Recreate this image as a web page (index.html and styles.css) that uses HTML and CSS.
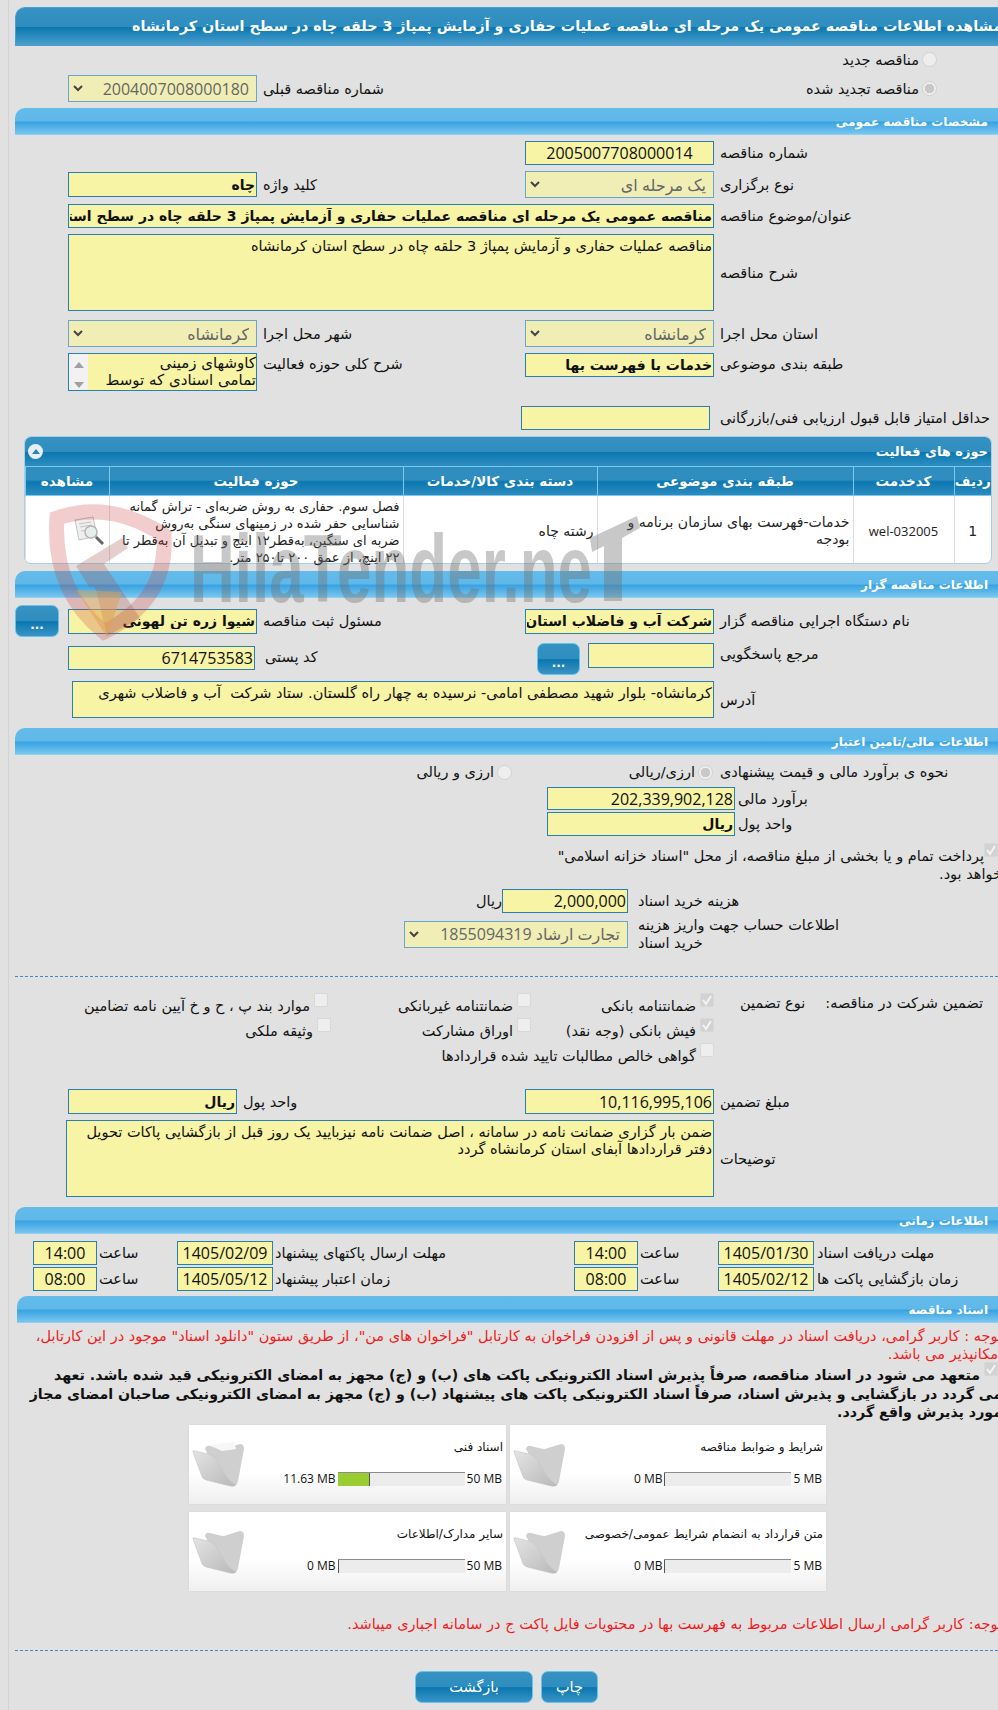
FILE: index.html
```html
<!DOCTYPE html>
<html lang="fa">
<head>
<meta charset="utf-8">
<title>مشاهده اطلاعات مناقصه</title>
<link rel="stylesheet" href="styles.css">
</head>
<body>
<div class="page">
  <h1 class="title">مشاهده اطلاعات مناقصه عمومی یک مرحله ای مناقصه عملیات حفاری و آزمایش پمپاژ 3 حلقه چاه در سطح استان کرمانشاه</h1>

  <div class="row r-new"><span class="radio"></span><span>مناقصه جدید</span></div>
  <div class="row r-renew">
    <div class="cell-a radio-cell"><span class="radio on"></span><span>مناقصه تجدید شده</span></div>
    <div class="cell-b"></div>
    <div class="cell-c">شماره مناقصه قبلی</div>
    <select class="sel w-b" disabled><option>2004007008000180</option></select>
  </div>

  <h2 class="sec">مشخصات مناقصه عمومی</h2>

  <div class="row m6 mid">
    <div class="cell-a">شماره مناقصه</div>
    <input class="fld num w-b center" readonly value="2005007708000014">
  </div>
  <div class="row m6 mid">
    <div class="cell-a">نوع برگزاری</div>
    <select class="sel w-b" disabled><option>یک مرحله ای</option></select>
    <div class="cell-c">کلید واژه</div>
    <input class="fld w-b h25 strong" readonly value="چاه">
  </div>
  <div class="row m6 mid">
    <div class="cell-a">عنوان/موضوع مناقصه</div>
    <input class="fld strong w-wide" readonly value="مناقصه عمومی یک مرحله ای مناقصه عملیات حفاری و آزمایش پمپاژ 3 حلقه چاه در سطح استان کرمانشاه">
  </div>
  <div class="row m6 mid">
    <div class="cell-a">شرح مناقصه</div>
    <textarea class="area w-wide h77" readonly>مناقصه عملیات حفاری و آزمایش پمپاژ 3 حلقه چاه در سطح استان کرمانشاه</textarea>
  </div>
  <div class="row m9 mid">
    <div class="cell-a">استان محل اجرا</div>
    <select class="sel w-b" disabled><option>کرمانشاه</option></select>
    <div class="cell-c">شهر محل اجرا</div>
    <select class="sel w-b" disabled><option>کرمانشاه</option></select>
  </div>
  <div class="row m6">
    <div class="cell-a pt3">طبقه بندی موضوعی</div>
    <input class="fld strong w-b" readonly value="خدمات با فهرست بها">
    <div class="cell-c pt3">شرح کلی حوزه فعالیت</div>
    <div class="listbox w-b">
      <div class="listbox-text">کاوشهای زمینی<br>تمامی اسنادی که توسط</div>
      <div class="listbox-bar"><span class="tri-up"></span><span class="tri-down"></span></div>
    </div>
  </div>
  <div class="row m15 mid">
    <div class="cell-a">حداقل امتیاز قابل قبول ارزیابی فنی/بازرگانی</div>
    <input class="fld w-b ms4" readonly>
  </div>

  <section class="activity">
    <div class="activity-head"><span>حوزه های فعالیت</span><span class="collapse"><span class="collapse-tri"></span></span></div>
    <table class="grid">
      <thead>
        <tr><th class="c1">ردیف</th><th class="c2">کدخدمت</th><th class="c3">طبقه بندی موضوعی</th><th class="c4">دسته بندی کالا/خدمات</th><th class="c5">حوزه فعالیت</th><th class="c6">مشاهده</th></tr>
      </thead>
      <tbody>
        <tr>
          <td class="tc">1</td>
          <td class="tc num-cell">wel-032005</td>
          <td>خدمات-فهرست بهای سازمان برنامه و<br>بودجه</td>
          <td>رشته چاه</td>
          <td class="td-scope">فصل سوم. حفاری به روش ضربه‌ای - تراش گمانه<br>شناسایی حفر شده در زمینهای سنگی به‌روش<br>ضربه ای سنگین، به‌قطر۱۲ اینچ و تبدیل آن به‌قطر تا<br>۲۲ اینچ، از عمق ۲۰۰ تا۲۵۰ متر.</td>
          <td class="td-view">
            <svg class="view-ico" viewBox="0 0 34 30" aria-hidden="true"><path d="M2 4 L20 1 L24 20 L6 24 Z" fill="#efefef" stroke="#c4c4c4"/><path d="M6 8 L18 6 M7 11 L19 9 M8 15 L14 14" stroke="#c4c4c4"/><circle cx="18" cy="16" r="6" fill="#e8eeee" stroke="#b4b4b4" stroke-width="1.5"/><path d="M23 21 L30 28" stroke="#666" stroke-width="3"/></svg>
          </td>
        </tr>
      </tbody>
    </table>
  </section>

  <h2 class="sec m7">اطلاعات مناقصه گزار</h2>

  <div class="row m7 mid">
    <div class="cell-a">نام دستگاه اجرایی مناقصه گزار</div>
    <input class="fld strong w-b h25" readonly value="شرکت آب و فاضلاب استان">
    <div class="cell-c">مسئول ثبت مناقصه</div>
    <input class="fld strong w-b h25" readonly value="شیوا زره تن لهونی">
    <button class="btn dots m-s9" type="button">...</button>
  </div>
  <div class="row m6">
    <div class="cell-a pt3">مرجع پاسخگویی</div>
    <input class="fld w-126 h25" readonly>
    <button class="btn dots w-43 m-s8" type="button">...</button>
    <div class="cell-d">کد پستی</div>
    <input class="fld num w-187 mt3" readonly value="6714753583">
  </div>
  <div class="row m6 mid">
    <div class="cell-a">آدرس</div>
    <textarea class="area w-642 h37" readonly>کرمانشاه- بلوار شهید مصطفی امامی- نرسیده به چهار راه گلستان. ستاد شرکت  آب و فاضلاب شهری</textarea>
  </div>

  <h2 class="sec m10">اطلاعات مالی/تامین اعتبار</h2>

  <div class="row m6 h22 mid">
    <div class="cell-a">نحوه ی برآورد مالی و قیمت پیشنهادی</div>
    <span class="radio on ms1"></span><span class="opt-a">ارزی/ریالی</span>
    <span class="radio"></span><span>ارزی و ریالی</span>
  </div>
  <div class="row m4 mid">
    <div class="cell-e">برآورد مالی</div>
    <input class="fld num w-188 h23" readonly value="202,339,902,128">
  </div>
  <div class="row m2 mid">
    <div class="cell-e">واحد پول</div>
    <input class="fld strong w-188" readonly value="ریال">
  </div>
  <p class="treasury"><span class="check on"></span>پرداخت تمام و یا بخشی از مبلغ مناقصه، از محل "اسناد خزانه اسلامی" خواهد بود.</p>
  <div class="row m6 mid">
    <div class="cell-f">هزینه خرید اسناد</div>
    <input class="fld num w-126" readonly value="2,000,000">
    <span class="unit">ریال</span>
  </div>
  <div class="row m3 mid">
    <div class="cell-f"><span class="wrap-lbl">اطلاعات حساب جهت واریز هزینه خرید اسناد</span></div>
    <select class="sel w-224" disabled><option>تجارت ارشاد 1855094319</option></select>
  </div>

  <hr class="dash dash-a">

  <div class="guar">
    <div class="g-head"><span>تضمین شرکت در مناقصه:</span><span class="g-type">نوع تضمین</span></div>
    <label class="g-opt"><span class="check on"></span>ضمانتنامه بانکی</label>
    <label class="g-opt"><span class="check"></span>ضمانتنامه غیربانکی</label>
    <label class="g-opt"><span class="check"></span>موارد بند پ ، ح و خ آیین نامه تضامین</label>
    <div></div>
    <label class="g-opt"><span class="check on"></span>فیش بانکی (وجه نقد)</label>
    <label class="g-opt"><span class="check"></span>اوراق مشارکت</label>
    <label class="g-opt g-nudge"><span class="check"></span>وثیقه ملکی</label>
    <div></div>
    <label class="g-opt g-wide"><span class="check"></span>گواهی خالص مطالبات تایید شده قراردادها</label>
  </div>

  <div class="row m21 mid">
    <div class="cell-a">مبلغ تضمین</div>
    <input class="fld num w-b h25" readonly value="10,116,995,106">
    <div class="cell-c cell-c-wide">واحد پول</div>
    <input class="fld strong w-169 h25" readonly value="ریال">
  </div>
  <div class="row m6 mid">
    <div class="cell-a">توضیحات</div>
    <textarea class="area w-648 h77" readonly>ضمن بار گزاری ضمانت نامه در سامانه ، اصل ضمانت نامه نیزبایید یک روز قبل از بازگشایی پاکات تحویل دفتر قراردادها آبفای استان کرمانشاه گردد</textarea>
  </div>

  <h2 class="sec m10">اطلاعات زمانی</h2>

  <div class="row m7 mid">
    <div class="d-lbl">مهلت دریافت اسناد</div>
    <input class="fld num center w-96 h24" readonly value="1405/01/30">
    <div class="d-hour">ساعت</div>
    <input class="fld num center w-64 h24" readonly value="14:00">
    <div class="d-lbl2">مهلت ارسال پاکتهای پیشنهاد</div>
    <input class="fld num center w-96 h24" readonly value="1405/02/09">
    <div class="d-hour">ساعت</div>
    <input class="fld num center w-64 h24" readonly value="14:00">
  </div>
  <div class="row m2 mid">
    <div class="d-lbl">زمان بازگشایی پاکت ها</div>
    <input class="fld num center w-96 h24" readonly value="1405/02/12">
    <div class="d-hour">ساعت</div>
    <input class="fld num center w-64 h24" readonly value="08:00">
    <div class="d-lbl2">زمان اعتبار پیشنهاد</div>
    <input class="fld num center w-96 h24" readonly value="1405/05/12">
    <div class="d-hour">ساعت</div>
    <input class="fld num center w-64 h24" readonly value="08:00">
  </div>

  <h2 class="sec sec-docs">اسناد مناقصه</h2>

  <p class="red red-a">توجه : کاربر گرامی، دریافت اسناد در مهلت قانونی و پس از افزودن فراخوان به کارتابل "فراخوان های من"، از طریق ستون "دانلود اسناد" موجود در این کارتابل، امکانپذیر می باشد.</p>
  <p class="pledge"><span class="check on"></span>متعهد می شود در اسناد مناقصه، صرفاً پذیرش اسناد الکترونیکی پاکت های (ب) و (ج) مجهز به امضای الکترونیکی قید شده باشد. تعهد<br>می گردد در بازگشایی و پذیرش اسناد، صرفاً اسناد الکترونیکی پاکت های پیشنهاد (ب) و (ج) مجهز به امضای الکترونیکی صاحبان امضای مجاز<br>مورد پذیرش واقع گردد.</p>

  <div class="cards">
    <article class="card">
      <div class="card-title">شرایط و ضوابط مناقصه</div>
      <div class="meter"><span>5 MB</span><div class="bar"></div><span>0 MB</span></div>
      <svg class="folder" viewBox="0 0 52 46" aria-hidden="true"><use href="#folder-art"/></svg>
    </article>
    <article class="card">
      <div class="card-title">اسناد فنی</div>
      <div class="meter"><span>50 MB</span><div class="bar"><div class="fill"></div></div><span>11.63 MB</span></div>
      <svg class="folder" viewBox="0 0 52 46" aria-hidden="true"><use href="#folder-art"/><path d="M17 4 L42 1 L44 8 L30 10 Z" fill="#f7f7f7"/></svg>
    </article>
    <article class="card">
      <div class="card-title">متن قرارداد به انضمام شرایط عمومی/خصوصی</div>
      <div class="meter"><span>5 MB</span><div class="bar"></div><span>0 MB</span></div>
      <svg class="folder" viewBox="0 0 52 46" aria-hidden="true"><use href="#folder-art"/></svg>
    </article>
    <article class="card">
      <div class="card-title">سایر مدارک/اطلاعات</div>
      <div class="meter"><span>50 MB</span><div class="bar"></div><span>0 MB</span></div>
      <svg class="folder" viewBox="0 0 52 46" aria-hidden="true"><use href="#folder-art"/></svg>
    </article>
  </div>

  <p class="red red-b">توجه: کاربر گرامی ارسال اطلاعات مربوط به فهرست بها در محتویات فایل پاکت ج در سامانه اجباری میباشد.</p>

  <hr class="dash dash-b">

  <div class="actions">
    <button class="btn act-print" type="button">چاپ</button>
    <button class="btn act-back" type="button">بازگشت</button>
  </div>
</div>

<svg class="defs" width="0" height="0" aria-hidden="true">
  <defs>
    <linearGradient id="fg" x1="0" y1="0" x2="1" y2="1"><stop offset="0" stop-color="#e4e4e4"/><stop offset="1" stop-color="#b8b8b8"/></linearGradient>
    <g id="folder-art">
      <path d="M13 8 Q14 4 18 5 L26 7 Q29 8 32 8 L48 3 Q52 3 52 8 L46 40 Q45 45 42 44 L30 40 Z" fill="#cfcfcf"/>
      <path d="M1 11 Q0 9 3 10 L16 13 Q20 14 23 17 L34 35 Q38 41 44 44 Q42 46 38 45 L14 39 Q10 38 9 33 Z" fill="url(#fg)" stroke="#c4c4c4" stroke-width=".6"/>
    </g>
  </defs>
</svg>

<svg class="watermark" viewBox="0 0 998 700" aria-hidden="true">
  <path d="M164 535 Q110 500 57 518 Q52 590 104 632 Q168 600 164 535 Z" fill="none" stroke="#c83c3c" stroke-opacity=".26" stroke-width="15"/>
  <path d="M76 566 L122 538 L128 548 L104 564 L140 618 L107 636 L96 590 L92 586 L90 588 L76 566 Z" fill="#a05050" fill-opacity=".28"/>
  <path d="M76 590 L107 637 L122 592 Z" fill="#e0a050" fill-opacity=".5"/>
  <text class="wm-text" x="190" y="602" textLength="402" lengthAdjust="spacingAndGlyphs">HilaTender.ne</text>
  <path d="M590 538 L637 516 L640 528 L622 538 L622 601 L604 601 L604 546 L592 552 Z" fill="#6e6e6e" fill-opacity=".38"/>
</svg>
</body>
</html>
```

FILE: styles.css
```css
* { box-sizing: border-box; }
html {
  background: linear-gradient(90deg, #e1e1e1 8px, #d3d3d3 8px, #d3d3d3 9px, #e1e1e1 9px);
}
body {
  margin: 0;
  width: 998px;
  height: 1710px;
  overflow: hidden;
  position: relative;
  font-family: "DejaVu Sans", sans-serif;
  font-size: 14.5px;
  color: #111;
}
.page { width: 987px; margin-left: 15px; padding-top: 7px; direction: rtl; }

.title {
  margin: 0;
  height: 39px;
  line-height: 37px;
  font-size: 14.3px;
  font-weight: bold;
  color: #fff;
  white-space: nowrap;
  overflow: hidden;
  border-top-left-radius: 10px;
  border: 1px solid #4b9ed2;
  border-right: 0;
  background: linear-gradient(#3592c2 0, #2f8dbf 50%, #0a77b0 52%, #4c9ecb 100%);
}
.sec {
  margin: 6px 0 0;
  height: 27px;
  line-height: 28px;
  padding-right: 14px;
  font-size: 12px;
  font-weight: bold;
  color: #fff;
  border-top-left-radius: 10px;
  border-bottom: 1px solid #8ed0f2;
  background: linear-gradient(#63bbea 0, #5fb8e8 50%, #37a2e2 54%, #79c6ee 100%);
}
.sec-docs { margin: 5px 0 0 2px; }

.row { display: flex; align-items: flex-start; }
.mid { align-items: center; }

.r-new { height: 29px; padding-right: 65px; padding-top: 6px; }
.r-renew { align-items: center; }
.radio-cell { display: flex; padding-right: 65px; padding-left: 0; align-items: center; }
.radio {
  display: inline-block;
  flex: none;
  width: 15px;
  height: 15px;
  margin-left: 3px;
  border-radius: 50%;
  border: 1.5px solid #d2d2d2;
  background: #eee;
}
.radio.on { background: radial-gradient(circle, #c8c8c8 0 4.5px, #eee 5px); }
.opt-a { width: 183px; }

.cell-a { flex: none; width: 288px; text-align: left; padding-left: 6px; }
.cell-b { flex: none; width: 189px; }
.cell-c { flex: none; width: 268px; text-align: left; padding-left: 6px; }
.cell-c-wide { width: 288px; }
.cell-d { flex: none; width: 282px; text-align: left; padding-left: 10px; padding-top: 6px; }
.cell-e { flex: none; width: 267px; text-align: left; padding-left: 3px; }
.cell-f { flex: none; width: 374px; text-align: left; padding-left: 10px; }
.wrap-lbl { display: inline-block; width: 205px; line-height: 18px; text-align: left; vertical-align: middle; }

.fld, .sel, .area {
  display: block;
  flex: none;
  margin: 0;
  font-family: "DejaVu Sans", sans-serif;
  color: #111;
  background-color: #f7f4a5;
  border: 1px solid #2b7fb0;
  border-radius: 0;
  outline: 0;
  direction: rtl;
}
.fld { height: 24px; padding: 0 1px; font-size: 14px; }
.strong { font-weight: bold; }
.num { font-family: "Open Sans", "DejaVu Sans", sans-serif; font-size: 16px; text-align: right; direction: ltr; }
.center { text-align: center; }
.sel {
  height: 27px;
  font-family: "Open Sans", "DejaVu Sans", sans-serif;
  font-size: 16px;
  color: #666;
  opacity: 1;
  padding: 0 7px 0 20px;
  appearance: none;
  border-color: #6aa5cc;
  background-color: #f0eeb5;
  background-image: url("data:image/svg+xml,%3Csvg xmlns='http://www.w3.org/2000/svg' width='10' height='7'%3E%3Cpath d='M1 1 L5 5 L9 1' fill='none' stroke='%23444' stroke-width='2'/%3E%3C/svg%3E");
  background-repeat: no-repeat;
  background-position: left 4px center;
}
.area {
  resize: none;
  overflow: hidden;
  padding: 3px 1px;
  font-size: 14.5px;
  line-height: 17px;
}
.w-b { width: 189px; }
.w-wide { width: 646px; }
.w-642 { width: 642px; }
.w-648 { width: 648px; }
.w-126 { width: 126px; }
.w-43 { width: 43px; }
.w-187 { width: 187px; }
.w-188 { width: 188px; }
.w-169 { width: 169px; }
.w-224 { width: 224px; }
.w-96 { width: 96px; }
.w-64 { width: 64px; }
.h23 { height: 23px; }
.h24 { height: 24px; }
.h25 { height: 25px; }
.h37 { height: 37px; }
.h77 { height: 77px; }

.btn {
  display: block;
  flex: none;
  padding: 0;
  font-family: "DejaVu Sans", sans-serif;
  color: #fff;
  border: 1px solid #66c4ea;
  border-radius: 7px;
  background: linear-gradient(#3592c2 0, #2f8dbf 50%, #0a77b0 52%, #3a94c6 100%);
}
.dots { width: 44px; height: 32px; font-size: 12px; font-weight: bold; padding-top: 7px; }
.dots.w-43 { width: 43px; }

.listbox {
  display: flex;
  height: 38px;
  flex: none;
  overflow: hidden;
  background: #f7f4a5;
  border: 1px solid #2b7fb0;
}
.listbox-text { flex: 1; font-size: 15px; line-height: 17px; white-space: nowrap; padding-top: 1px; overflow: hidden; }
.listbox-bar {
  flex: none;
  width: 19px;
  display: flex;
  flex-direction: column;
  justify-content: space-between;
  align-items: center;
  padding: 8px 0 2px;
  background: #f2f2f2;
}
.tri-up, .tri-down { width: 0; height: 0; border: 5px solid transparent; }
.tri-up { border-bottom: 6px solid #a0a0a0; border-top: 0; }
.tri-down { border-top: 6px solid #a0a0a0; border-bottom: 0; }

.activity {
  margin: 6px 10px 0 9px;
  height: 128px;
  border-radius: 7px;
  border: 1px solid #a9cfe6;
  background: #fff;
}
.activity-head {
  height: 29px;
  display: flex;
  justify-content: space-between;
  align-items: center;
  padding: 0 3px 0 3px;
  font-size: 13px;
  font-weight: bold;
  color: #fff;
  border-radius: 6px 6px 0 0;
  background: linear-gradient(#3592c2 0, #2f8dbf 50%, #0a77b0 52%, #2e8dc0 100%);
}
.collapse {
  width: 15px;
  height: 15px;
  border-radius: 50%;
  background: #e9eef2;
  display: flex;
  align-items: center;
  justify-content: center;
}
.collapse-tri { width: 0; height: 0; border: 4px solid transparent; border-bottom: 5px solid #2583b6; border-top: 0; }
.grid { width: 966px; table-layout: fixed; border-collapse: collapse; }
.grid th {
  height: 29px;
  padding: 0;
  color: #fff;
  font-size: 13.5px;
  font-weight: bold;
  border-left: 1px solid #7cc8ef;
  border-top: 1px solid #7cc8ef;
  border-bottom: 1px solid #7cc8ef;
  background: linear-gradient(#2f8dbf 0, #2f8dbf 45%, #0a77b0 50%, #2e8dc0 100%);
}
.grid td {
  height: 68px;
  padding: 0 3px;
  line-height: 17px;
  font-size: 14px;
  border-left: 1px solid #ddd;
  color: #222;
}
.grid .td-scope { font-size: 13px; white-space: nowrap; padding-top: 2px; }
.grid .td-view { padding: 0; }
.c1 { width: 37px; }
.c2 { width: 101px; }
.c3 { width: 256px; }
.c4 { width: 194px; }
.c5 { width: 294px; }
.c6 { width: 84px; }
.tc { text-align: center; }
.num-cell { font-family: "Open Sans", sans-serif; }
.grid .num-cell { font-size: 13px; }
.view-ico { width: 34px; height: 30px; display: block; margin: 0 2px 0 0; }

.treasury {
  width: 459px;
  margin: 7px 0 0;
  line-height: 18px;
}
.check {
  display: inline-block;
  width: 14px;
  height: 14px;
  margin-right: 4px;
  vertical-align: 4px;
  border-radius: 2px;
  border: 1px solid #d8d8d8;
  background: #eeeeee;
}
.check.on {
  background: #d2d2d2 url("data:image/svg+xml,%3Csvg xmlns='http://www.w3.org/2000/svg' width='12' height='12'%3E%3Cpath d='M2 6 L5 10 L10 2' fill='none' stroke='%23f4f4f4' stroke-width='2'/%3E%3C/svg%3E") no-repeat center;
}
.dash { height: 0; border: 0; border-top: 1px dashed #3a8dbd; margin: 0; }
.dash-a { margin-top: 24px; width: 983px; margin-right: 4px; }
.guar {
  margin-top: 16px;
  display: grid;
  grid-template-columns: 288px 183px 203px 1fr;
  grid-auto-rows: 25px;
}
.g-head { display: flex; padding-right: 19px; padding-top: 2px; }
.g-type { margin-right: 20px; }
.g-opt { white-space: nowrap; }
.g-opt .check { margin-right: 0; margin-left: 4px; }
.g-nudge { margin-right: -3px; }
.g-wide { grid-column: span 3; }

.d-lbl { flex: none; width: 188px; text-align: left; padding-left: 3px; }
.d-hour { flex: none; width: 80px; text-align: left; padding-left: 2px; }
.d-lbl2 { flex: none; width: 301px; text-align: left; padding-left: 2px; }

.red { margin: 0; color: #f01c1c; }
.red-a { margin-top: 4px; line-height: 18px; padding-left: 10px; }
.red-b { margin-top: 24px; line-height: 18px; }
.pledge {
  margin: -1px 0 0;
  font-size: 14.2px;
  font-weight: bold;
  line-height: 18.5px;
  white-space: nowrap;
}
.pledge .check { margin-right: 4px; margin-left: 4px; }

.cards {
  display: grid;
  grid-template-columns: 316px 317px;
  grid-auto-rows: 79px;
  gap: 8px 4px;
  margin: 3px 176px 0 0;
}
.card {
  position: relative;
  padding: 12px 3px 0 0;
  background: linear-gradient(#fff 0, #fff 60%, #efefef 100%);
  box-shadow: 0 0 2px #d4d4d4;
  font-size: 12px;
}
.card-title { height: 35px; line-height: 20px; white-space: nowrap; }
.meter { display: flex; align-items: center; height: 14px; font-family: "Open Sans", sans-serif; font-size: 12px; margin-right: -1px; }
.meter span { white-space: nowrap; margin: 0 2px; direction: ltr; unicode-bidi: embed; }
.bar {
  width: 127px;
  height: 14px;
  background: #ececec;
  border-top: 1px solid #8c8c8c;
  direction: ltr;
  box-shadow: inset 1px 0 0 #555;
}
.fill { width: 32px; height: 13px; background: #9acd32; border-right: 1px solid #555; }
.folder { position: absolute; left: 3px; top: 16px; width: 52px; height: 46px; }
.defs { position: absolute; }

.dash-b { margin-top: 17px; width: 983px; margin-right: 4px; }
.actions { display: flex; gap: 8px; margin: 20px 404px 0 0; }
.act-back { width: 118px; height: 32px; font-size: 14.5px; }
.act-print { width: 57px; height: 32px; font-size: 14.5px; }

.watermark { position: absolute; left: 0; top: 0; width: 998px; height: 700px; pointer-events: none; }
.wm-text { font-family: "Liberation Sans", sans-serif; font-weight: bold; font-size: 96px; fill: #6e6e6e; fill-opacity: .38; }

.m2 { margin-top: 2px; }
.m3 { margin-top: 3px; }
.m4 { margin-top: 4px; }
.m6 { margin-top: 6px; }
.m7 { margin-top: 7px; }
.m9 { margin-top: 9px; }
.m10 { margin-top: 10px; }
.m15 { margin-top: 15px; }
.m21 { margin-top: 21px; }
.h22 { height: 22px; }
.pt3 { padding-top: 3px; }
.mt3 { margin-top: 3px; }
.ms4 { margin-right: 4px; }
.ms1 { margin-right: 1px; }
.m-s9 { margin-right: 9px; }
.m-s8 { margin-right: 8px; }
```
